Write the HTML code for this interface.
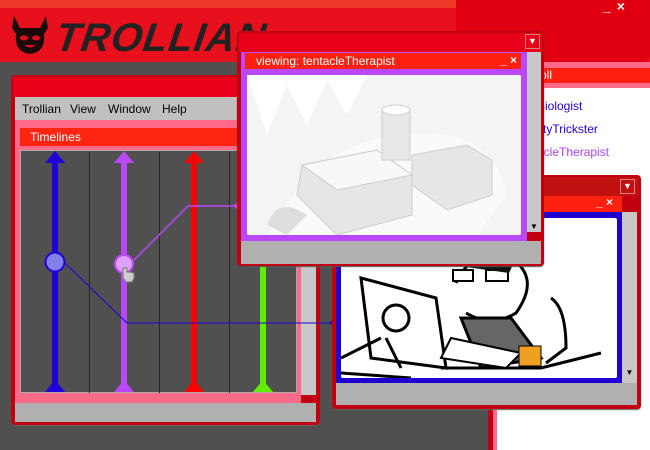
<!DOCTYPE html>
<html><head><meta charset="utf-8"><style>
*{margin:0;padding:0;box-sizing:border-box}
body{width:650px;height:450px;overflow:hidden;background:#505050;position:relative;font-family:"Liberation Sans",sans-serif;font-size:12px}
.a{position:absolute}
.t{color:#fff;font-size:12px}
</style></head><body>
<!-- top banner -->
<div class="a" style="left:0;top:0;width:650px;height:62px;background:#e8101c"></div>
<div class="a" style="left:0;top:0;width:456px;height:8px;background:#f03828"></div>
<div class="a" style="left:456px;top:0;width:194px;height:62px;background:#e00010;border-bottom-right-radius:8px"></div>
<div class="a t" style="left:603px;top:-2px;font-size:14px;font-weight:bold;letter-spacing:6px">_×</div>
<!-- logo -->
<svg class="a" style="left:10px;top:14px" width="40" height="42" viewBox="0 0 40 42">
<path d="M4 2 L10 14 L30 14 L36 2 L38 14 L34 20 Q36 38 20 40 Q4 38 6 20 L2 14 Z" fill="#1a0a0a"/>
<ellipse cx="14" cy="24" rx="4" ry="2.5" fill="#e0101a"/><ellipse cx="26" cy="24" rx="4" ry="2.5" fill="#e0101a"/>
<path d="M14 31 Q20 36 26 31 Z" fill="#e0101a"/></svg>
<div class="a" style="left:56px;top:16px;font-size:40px;font-weight:bold;font-style:italic;color:#222;letter-spacing:1px;transform:skewX(-8deg)">TROLLIAN</div>

<!-- right chumroll panel -->
<div class="a" style="left:488px;top:62px;width:162px;height:388px;background:#c00010"></div>
<div class="a" style="left:493px;top:62px;width:157px;height:388px;background:#ff6a88"></div>
<div class="a" style="left:493px;top:68px;width:157px;height:15px;background:#ff2010"></div>
<div class="a t" style="left:540px;top:68px">oll</div>
<div class="a" style="left:497px;top:88px;width:153px;height:362px;background:#fff"></div>
<div class="a" style="left:537px;top:99px;color:#2000d0">Biologist</div>
<div class="a" style="left:537px;top:122px;color:#2000d0">styTrickster</div>
<div class="a" style="left:537px;top:145px;color:#b040f0">acleTherapist</div>

<!-- main timelines window -->
<div class="a" style="left:11px;top:75px;width:309px;height:350px;background:#c00010;border-radius:4px;box-shadow:0 1px 0 #666"></div>
<div class="a" style="left:13px;top:77px;width:305px;height:20px;background:#e8001a"></div>
<div class="a" style="left:15px;top:97px;width:301px;height:23px;background:#c0c0c0"></div>
<div class="a" style="left:22px;top:102px;color:#000">Trollian</div>
<div class="a" style="left:70px;top:102px;color:#000">View</div>
<div class="a" style="left:108px;top:102px;color:#000">Window</div>
<div class="a" style="left:162px;top:102px;color:#000">Help</div>
<div class="a" style="left:15px;top:120px;width:286px;height:283px;background:#ff6a88"></div>
<div class="a" style="left:20px;top:128px;width:281px;height:18px;background:#ff2510"></div>
<div class="a t" style="left:30px;top:130px">Timelines</div>
<div class="a" style="left:20px;top:150px;width:277px;height:243px;background:#505050;border:1px solid #aaa"></div>
<div class="a" style="left:301px;top:120px;width:15px;height:275px;background:#c8c8c8"></div>
<div class="a" style="left:15px;top:403px;width:301px;height:19px;background:#b0b0b0"></div>
<svg class="a" style="left:0;top:0" width="650" height="450">
<g stroke="#262626"><line x1="89.5" y1="152" x2="89.5" y2="393"/><line x1="159.5" y1="152" x2="159.5" y2="393"/><line x1="229.5" y1="152" x2="229.5" y2="393"/></g>
<g>
<rect x="52" y="158" width="6" height="226" fill="#2000d8"/><path d="M45 163 L55 151 L65 163Z M45 392 L55 380 L65 392Z" fill="#2000d8"/>
<rect x="121" y="158" width="6" height="226" fill="#b848f8"/><path d="M114 163 L124 151 L134 163Z M114 392 L124 380 L134 392Z" fill="#b848f8"/>
<rect x="191" y="158" width="6" height="226" fill="#ff0000"/><path d="M184 163 L194 151 L204 163Z M184 392 L194 380 L204 392Z" fill="#ff0000"/>
<rect x="260" y="265" width="6" height="119" fill="#60ee00"/><path d="M253 392 L263 380 L273 392Z" fill="#60ee00"/>
</g>
<polyline points="64,262 127,323 335,323" fill="none" stroke="#2000d8" stroke-width="1"/>
<polyline points="131,263 188,206 240,206" fill="none" stroke="#b848f8" stroke-width="1.5"/>
<circle cx="55" cy="262" r="9.5" fill="#8080e8" stroke="#2000d8" stroke-width="2"/>
<circle cx="124" cy="264" r="9" fill="#e0a0ff" stroke="#b848f8" stroke-width="2"/>
<path d="M123 268 v10 l3 4 h6 l2 -4 v-5 l-4 -1 -3 0 v-4z" fill="#ccc" stroke="#777"/>
<path d="M329 323 l7 -6 v12z" fill="#2000d8"/>
<path d="M233 206 l7 -6 v12z" fill="#b848f8"/>
</svg>

<!-- blue window -->
<div class="a" style="left:332px;top:175px;width:309px;height:234px;background:#c00010;border-radius:4px;box-shadow:0 1px 1px #666"></div>
<div class="a" style="left:334px;top:177px;width:305px;height:19px;background:#c01010"></div>
<div class="a" style="left:620px;top:179px;width:15px;height:15px;border:1px solid #e08080;color:#fff;font-size:9px;text-align:center;line-height:13px">▼</div>
<div class="a" style="left:336px;top:196px;width:286px;height:16px;background:#ff2010"></div>
<div class="a t" style="left:596px;top:195px;font-weight:bold">_ ×</div>
<div class="a" style="left:336px;top:212px;width:286px;height:171px;background:#2000d0"></div>
<div class="a" style="left:341px;top:218px;width:276px;height:160px;background:#fff;border-radius:2px"></div>
<svg class="a" style="left:341px;top:218px" width="276" height="160" viewBox="0 0 276 160">
<g fill="none" stroke="#000" stroke-width="3">
<path d="M120 0 L150 -5 M95 5 L130 -5"/>
<path d="M20 60 L95 80 L105 150 L30 140 Z" fill="#fff"/>
<circle cx="55" cy="100" r="13"/><path d="M45 120 L60 150"/>
<path d="M0 140 L40 120 M0 155 L70 160 M100 150 L200 150 L260 135"/>
<path d="M115 65 Q130 30 170 40 Q200 60 175 95 Q150 110 125 95" fill="#fff"/>
<path d="M120 100 L170 100 L200 140 L140 150 Z" fill="#666"/>
<path d="M110 120 L180 135 L165 150 L100 140 Z" fill="#fff" stroke-width="2"/>
<path d="M210 80 Q225 90 225 130 L205 145" />
</g>
<rect x="112" y="52" width="20" height="11" fill="#fff" stroke="#000" stroke-width="2"/>
<rect x="145" y="52" width="22" height="11" fill="#fff" stroke="#000" stroke-width="2"/>
<path d="M120 30 Q150 20 175 40 L168 55 L118 48Z" fill="#111"/>
<rect x="178" y="128" width="22" height="20" fill="#f0a020" stroke="#000"/>
</svg>
<div class="a" style="left:622px;top:212px;width:15px;height:171px;background:#c8c8c8"></div>
<div class="a" style="left:622px;top:368px;width:15px;height:14px;color:#000;font-size:8px;text-align:center">▼</div>
<div class="a" style="left:336px;top:383px;width:301px;height:22px;background:#b0b0b0"></div>

<!-- viewing window -->
<div class="a" style="left:237px;top:31px;width:307px;height:235px;background:#c00010;border-radius:4px;box-shadow:0 1px 1px #555"></div>
<div class="a" style="left:239px;top:33px;width:303px;height:19px;background:#e8001a"></div>
<div class="a" style="left:525px;top:34px;width:15px;height:15px;border:1px solid #e08080;color:#fff;font-size:9px;text-align:center;line-height:13px">▼</div>
<div class="a" style="left:241px;top:52px;width:286px;height:189px;background:#b848f8"></div>
<div class="a" style="left:245px;top:53px;width:276px;height:16px;background:#ff2010"></div>
<div class="a t" style="left:256px;top:54px">viewing: tentacleTherapist</div>
<div class="a t" style="left:500px;top:53px;font-weight:bold">_ ×</div>
<div class="a" style="left:247px;top:75px;width:274px;height:160px;background:#f4f4f4;border-radius:2px"></div>
<svg class="a" style="left:247px;top:75px" width="274" height="160" viewBox="0 0 274 160">
<path d="M0 0 L20 60 L40 10 L60 50 L80 5 L100 40 L120 0Z" fill="#fff"/>
<path d="M60 100 Q120 50 200 60 Q250 70 260 120 L230 160 L20 160Z" fill="#fafafa"/>
<path d="M55 90 L130 75 L165 100 L165 140 L90 160 L50 120Z" fill="#e6e6e6" stroke="#ccc"/>
<path d="M55 90 L130 75 L165 100 L90 115Z" fill="#f8f8f8" stroke="#ccc"/>
<rect x="135" y="35" width="28" height="50" fill="#e8e8e8" stroke="#ccc"/>
<ellipse cx="149" cy="35" rx="14" ry="5" fill="#fff" stroke="#ccc"/>
<path d="M165 80 L220 70 L245 85 L245 120 L200 135 L165 110Z" fill="#e6e6e6" stroke="#ccc"/>
<path d="M20 150 Q30 120 60 140 L40 160Z" fill="#ddd"/>
</svg>
<div class="a" style="left:527px;top:52px;width:14px;height:180px;background:#c8c8c8"></div>
<div class="a" style="left:527px;top:222px;width:14px;height:12px;color:#000;font-size:8px;text-align:center">▼</div>
<div class="a" style="left:241px;top:241px;width:300px;height:23px;background:#b0b0b0"></div>
</body></html>
